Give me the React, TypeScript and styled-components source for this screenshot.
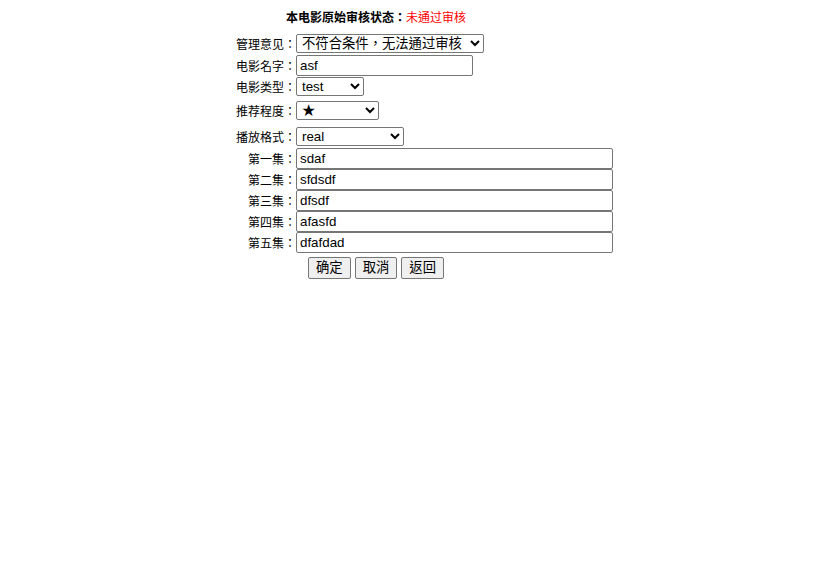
import React from "react";
import styled, { createGlobalStyle } from "styled-components";

const GlobalStyle = createGlobalStyle`
  body {
    margin: 8px;
    background: #ffffff;
    font-family: "Noto Sans CJK TC", "Noto Sans CJK SC", "Liberation Sans", sans-serif;
    font-size: 12px;
    color: #000000;
  }
`;

const Form = styled.div`
  margin-left: 222px;
  width: 383px;
`;

const Title = styled.div`
  height: 18px;
  line-height: 18px;
  padding-left: 56px;
  font-weight: bold;
  font-size: 12px;
  white-space: nowrap;
`;

const Status = styled.span`
  color: #ff0000;
  font-weight: normal;
`;

const Row = styled.div<{ $top: number; $h: number }>`
  display: grid;
  grid-template-columns: 66px auto;
  align-items: center;
  margin-top: ${(p) => p.$top}px;
  height: ${(p) => p.$h}px;
`;

const Label = styled.label`
  text-align: right;
  font-size: 12px;
  white-space: nowrap;
  line-height: 14px;
`;

const Field = styled.div`
  display: flex;
  align-items: center;
`;

const controlFont = `
  font-family: "Liberation Sans", "Noto Sans CJK TC", "Noto Sans CJK SC", sans-serif;
  font-size: 13.33px;
  color: #000000;
`;

const Select = styled.select<{ $w: number }>`
  ${controlFont}
  width: ${(p) => p.$w}px;
  height: 19px;
  box-sizing: border-box;
  border: 1px solid #767676;
  border-radius: 2px;
  background: #ffffff;
  padding: 0 0 0 1px;
  margin: 0;
`;

const TextInput = styled.input<{ $w: number }>`
  ${controlFont}
  width: ${(p) => p.$w}px;
  height: 21px;
  box-sizing: border-box;
  border: 1px solid #767676;
  border-radius: 2px;
  padding: 1px 3px;
  margin: 0;
`;

const Buttons = styled.div`
  display: flex;
  gap: 4px;
  margin-top: 4px;
  padding-left: 78px;
`;

const Button = styled.button`
  ${controlFont}
  height: 22px;
  padding: 1px 7px;
  border: 1px solid #767676;
  border-radius: 2px;
  background: #efefef;
  box-sizing: border-box;
  line-height: 16px;
`;

const episodes = [
  ["第一集：", "sdaf"],
  ["第二集：", "sfdsdf"],
  ["第三集：", "dfsdf"],
  ["第四集：", "afasfd"],
  ["第五集：", "dfafdad"],
];

export default function App() {
  return (
    <>
      <GlobalStyle />
      <Form>
        <Title>
          本电影原始审核状态：<Status>未通过审核</Status>
        </Title>
        <Row $top={8} $h={19}>
          <Label>管理意见：</Label>
          <Field>
            <Select $w={188} defaultValue="a">
              <option value="a">不符合条件，无法通过审核</option>
            </Select>
          </Field>
        </Row>
        <Row $top={2} $h={21}>
          <Label>电影名字：</Label>
          <Field>
            <TextInput $w={177} defaultValue="asf" />
          </Field>
        </Row>
        <Row $top={1} $h={19}>
          <Label>电影类型：</Label>
          <Field>
            <Select $w={68} defaultValue="test">
              <option value="test">test</option>
            </Select>
          </Field>
        </Row>
        <Row $top={5} $h={19}>
          <Label>推荐程度：</Label>
          <Field>
            <Select $w={83} defaultValue="1">
              <option value="1">★</option>
            </Select>
          </Field>
        </Row>
        <Row $top={7} $h={19}>
          <Label>播放格式：</Label>
          <Field>
            <Select $w={108} defaultValue="real">
              <option value="real">real</option>
            </Select>
          </Field>
        </Row>
        {episodes.map(([label, value], i) => (
          <Row key={label} $top={i === 0 ? 2 : 0} $h={21}>
            <Label>{label}</Label>
            <Field>
              <TextInput $w={317} defaultValue={value} />
            </Field>
          </Row>
        ))}
        <Buttons>
          <Button>确定</Button>
          <Button>取消</Button>
          <Button>返回</Button>
        </Buttons>
      </Form>
    </>
  );
}
